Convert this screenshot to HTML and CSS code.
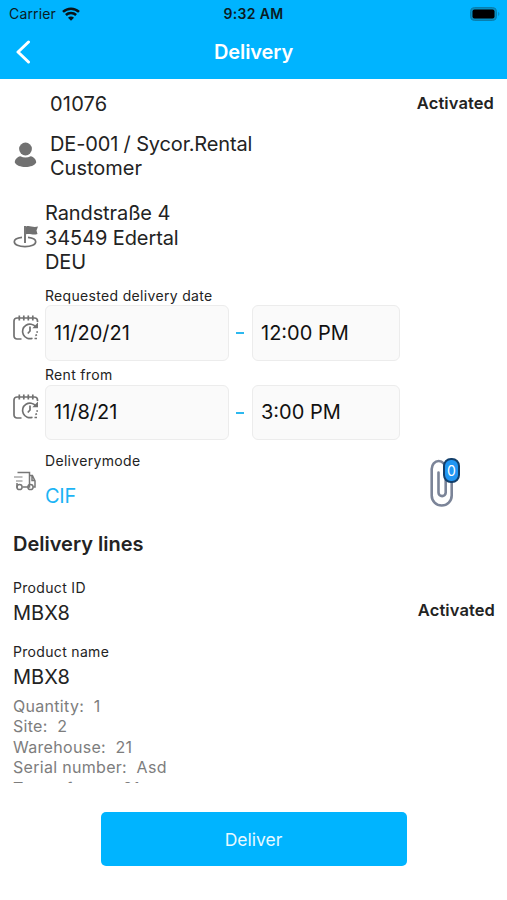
FILE: index.html
```html
<!DOCTYPE html>
<html lang="en">
<head>
<meta charset="utf-8">
<title>Delivery</title>
<link rel="stylesheet" href="styles.css">
</head>
<body>
<div class="app">
  <header class="header">
    <div class="status">
      <div class="carrier"><span>Carrier</span>
        <svg class="wifi" viewBox="0 0 18 14" width="18" height="14" fill="none" stroke="#0a1418" stroke-width="2.5"><path d="M1 4.900a11.500 11.500 0 0 1 16 0M3.900 8a7.300 7.300 0 0 1 10.200 0"/><path d="M9 13.800l-3-3.100a4.200 4.200 0 0 1 6 0z" fill="#0a1418" stroke="none"/></svg>
      </div>
      <div class="clock">9:32 AM</div>
      <svg class="battery" viewBox="0 0 31 14" width="31" height="14"><rect x=".5" y=".5" width="26" height="13" rx="4" fill="#078dc0" stroke="#087eae"/><rect x="2.500" y="2.500" width="22" height="9" rx="2" fill="#000"/><path d="M28.300 4.800q2 2.200 0 4.400z" fill="#087eae"/></svg>
    </div>
    <div class="nav">
      <svg class="back" viewBox="0 0 16 24" width="16" height="24" fill="none" stroke="#fff" stroke-width="3" stroke-linecap="round" stroke-linejoin="round"><path d="M13.500 2L3 12l10.500 10"/></svg>
      <h1 class="title">Delivery</h1>
    </div>
  </header>
  <main class="content">
    <div class="row order"><span class="big">01076</span><span class="state">Activated</span></div>
    <div class="row customer">
      <svg class="icon" viewBox="0 0 26 28" width="26" height="28" fill="#717171"><circle cx="12.500" cy="8" r="6.400"/><path d="M1.800 21.500c0-3.400 2.500-5.500 5.500-6.300q5.200 2.600 10.400 0c3 .8 5.500 2.900 5.500 6.300-1.500 3-6 4.500-10.700 4.500S3.300 24.500 1.800 21.500z"/></svg>
      <div class="big"><div class="company">DE-001 / Sycor.Rental</div><div>Customer</div></div>
    </div>
    <div class="row address">
      <svg class="icon" viewBox="0 0 26 26" width="26" height="26"><path d="M9 13.300C4 13.800 1.300 15.500 1.300 17.800c0 2.800 4.500 4.900 10.700 4.900s10.700-2.100 10.700-4.900c0-2.300-3-4-7.700-4.500" fill="none" stroke="#717171" stroke-width="1.700"/><path d="M12 19V2" stroke="#717171" stroke-width="1.900"/><path d="M13 2.500c4-1.500 6.500 1.500 12 0l-1.500 4 1 3.500c-5 1.500-7.500-1-11.500.3z" fill="#717171"/></svg>
      <div class="big street"><div>Randstraße 4</div><div>34549 Edertal</div><div>DEU</div></div>
    </div>
    <div class="row when">
      <svg class="icon cal" viewBox="0 0 27 27" width="27" height="27"><use href="#calendar"/></svg>
      <div class="field"><div class="label">Requested delivery date</div>
        <div class="inputs"><div class="box date">11/20/21</div><i class="dash"></i><div class="box time">12:00 PM</div></div>
      </div>
    </div>
    <div class="row when second">
      <svg class="icon cal" viewBox="0 0 27 27" width="27" height="27"><g id="calendar" fill="none" stroke="#717171" stroke-width="1.700"><path d="M8.500 25H4a3 3 0 0 1-3-3V7a3 3 0 0 1 3-3h17.500a3 3 0 0 1 3 3v1"/><path d="M6.300 1.500v5M10.800 1.500v5M15.300 1.500v5M19.800 1.500v5"/><path d="M22.700 13a7.300 7.300 0 1 0-3.200 11.200"/><path d="M25 8.500v5.700h-5.700z" fill="#717171" stroke="none"/><path d="M17 12.500v4.500l-2.200 2.500"/><path d="M23.300 18h1.700M22.300 21.500l1.700-.7M21.500 24.500h2.500" stroke-width="1.500"/></g></svg>
      <div class="field"><div class="label">Rent from</div>
        <div class="inputs"><div class="box date">11/8/21</div><i class="dash"></i><div class="box time">3:00 PM</div></div>
      </div>
    </div>
    <div class="row mode">
      <svg class="icon truck" viewBox="0 0 24 20" width="24" height="20" fill="none" stroke="#777" stroke-width="1.500"><path d="M4.500 1.500h12V16H9.500M4 12v4h1M16.500 4.500h2.900l2.600 5.500v6h-1.800M19 5v4.500h3"/><path d="M1 6h8.500M3 10h6.500" stroke="#aaa"/><circle cx="6.500" cy="16" r="2.600"/><circle cx="17.500" cy="16" r="2.600"/></svg>
      <div class="field"><div class="label">Deliverymode</div><div class="cif">CIF</div></div>
      <div class="attach">
        <svg viewBox="0 0 26 50" width="26" height="50" fill="none" stroke="#7b8498" stroke-width="2.600" stroke-linecap="round"><path d="M9.500 14.500v20a3.600 3.600 0 0 0 7.200 0V11a7 8 0 0 0-14 0v26.500a10 10 0 0 0 20 0V20"/></svg>
        <span class="badge">0</span>
      </div>
    </div>
    <h2 class="heading">Delivery lines</h2>
    <section class="line">
      <div class="pair"><div><div class="label">Product ID</div><div class="big">MBX8</div></div><span class="state">Activated</span></div>
      <div class="pair"><div><div class="label">Product name</div><div class="big">MBX8</div></div></div>
      <div class="details">
        <div>Quantity:&nbsp; 1</div><div>Site:&nbsp; 2</div><div>Warehouse:&nbsp; 21</div><div>Serial number:&nbsp; Asd</div><div>Type of rent:&nbsp; 21</div>
      </div>
    </section>
  </main>
  <footer class="footer"><button class="deliver">Deliver</button></footer>
</div>
</body>
</html>
```
FILE: styles.css
```css
* { box-sizing: border-box; }
body { margin: 0; background: #fff; color: #232323; font-family: Inter, "Liberation Sans", sans-serif; }
.app { width: 507px; height: 900px; display: flex; flex-direction: column; overflow: hidden; }
.header { height: 79px; background: #00b4ff; flex: none; }
.status { height: 27px; display: grid; grid-template-columns: 1fr auto 1fr; align-items: center; padding: 0 6px 0 9px; color: #0a1c24; }
.carrier { display: flex; align-items: center; gap: 6px; font-size: 14px; letter-spacing: .15px; }
.clock { font-size: 14px; font-weight: 600; letter-spacing: .35px; margin-right: 3px; }
.battery { justify-self: end; }
.nav { height: 52px; display: grid; grid-template-columns: 34px 1fr 34px; align-items: center; padding: 0 15px 2px 15px; }
.title { margin: 0; text-align: center; color: #fff; font-size: 20px; font-weight: 600; line-height: 26px; letter-spacing: -.1px; }
.content { height: 704px; flex: none; overflow: hidden; padding: 13px 13px 0; }
.row { display: flex; }
.big { font-size: 20px; line-height: 24.500px; }
.state { font-size: 16.500px; font-weight: 600; line-height: 22px; letter-spacing: .1px; white-space: nowrap; }
.order { justify-content: space-between; padding: 0 0 0 37px; height: 39px; }
.order .big { letter-spacing: .2px; }
.icon { flex: none; }
.customer { height: 69px; gap: 11px; }
.customer .big { padding-top: .5px; }
.customer .icon { margin-top: 10px; }
.company { letter-spacing: -.15px; }
.address { height: 87px; gap: 6px; }
.address .big { padding-top: 1px; letter-spacing: -.1px; }
.address .icon { margin-top: 24px; }
.when { height: 79px; gap: 5px; }
.cal { margin-top: 27px; }
.label { font-size: 14px; line-height: 18px; letter-spacing: .32px; white-space: nowrap; }
.field { flex: 1; }
.inputs { display: flex; align-items: center; }
.box { height: 56px; border: 1px solid #ececec; border-radius: 6px; background: #fafafa; font-size: 20px; display: flex; align-items: center; padding-left: 8px; color: #111; }
.date { width: 184px; }
.time { width: 148px; }
.dash { width: 8px; height: 2px; background: #2cb8ef; margin: 0 8px 0 7px; }
.second { height: 86px; }
.second .inputs { padding-top: 1px; }
.second .box { height: 55px; padding-bottom: 1px; }
.mode { height: 78px; gap: 8px; }
.truck { margin-top: 19px; }
.cif { color: #1cb4f5; font-size: 20px; line-height: 26px; letter-spacing: -.3px; margin-top: 13px; }
.attach { position: relative; width: 65px; padding-top: 6px; }
.badge { position: absolute; left: 14px; top: 6px; width: 17px; height: 25px; border: 2px solid #123f6b; border-radius: 8px; background: #2196f3; color: #fff; font-size: 14px; line-height: 21px; text-align: center; }
.heading { margin: 0; font-size: 20px; line-height: 29px; font-weight: 600; height: 49px; }
.pair { display: flex; justify-content: space-between; height: 64px; }
.pair .big { margin-top: 4px; }
.pair .state { margin: 20px -1px 0 0; }
.details { font-size: 16px; line-height: 20.400px; letter-spacing: .3px; color: #7d7d7d; margin-top: -11px; }
.footer { flex: 1; display: flex; justify-content: center; padding-top: 29px; }
.deliver { width: 306px; height: 54px; border: 0; border-radius: 5px; background: #00b4ff; color: #e8f9ff; font: 400 17.500px Inter, sans-serif; }
```
